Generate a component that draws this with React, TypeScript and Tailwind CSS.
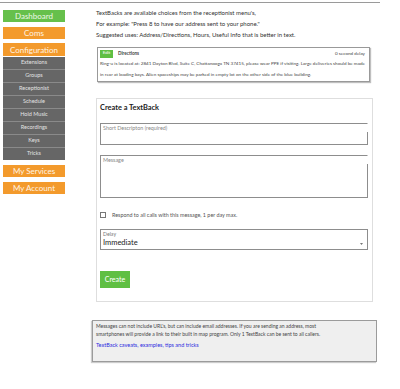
import React from "react";

const subItems = ["Extensions", "Groups", "Receptionist", "Schedule", "Hold Music", "Recordings", "Keys", "Tricks"];

function NavButton({ label, color }: { label: string; color: "green" | "orange" }) {
  return (
    <div
      className={
        color === "green"
          ? "h-[12px] flex items-center justify-center bg-[#66c04b] text-[#eef8e8] text-[8px] leading-none"
          : "h-[12px] flex items-center justify-center bg-[#f39a2c] text-[#fff4e4] text-[8px] leading-none"
      }
    >
      {label}
    </div>
  );
}

function Field({ label, height }: { label: string; height: string }) {
  return (
    <div className={`relative ${height} border border-[#8d8d8d] border-r-transparent`}>
      <div className="absolute right-[-1px] top-[8px] bottom-[-1px] w-px bg-[#8d8d8d]" />
      <div className="pl-[2px] pt-[1px] text-[5.4px] leading-[7px] text-[#888]">{label}</div>
    </div>
  );
}

export default function App() {
  return (
    <div className="w-[400px] h-[389px] bg-white overflow-hidden font-['Lato',sans-serif] pt-[2px]">
      <div className="w-[380px] h-px bg-[#9a9a9a]" />
      <div className="flex">
        {/* sidebar */}
        <div className="ml-[3px] mt-[7px] w-[62px] flex flex-col">
          <NavButton label="Dashboard" color="green" />
          <div className="mt-[5px]">
            <NavButton label="Coms" color="orange" />
          </div>
          <div className="mt-[4px] h-[13px] flex items-center justify-center bg-[#f39a2c] text-[#fff4e4] text-[8px] leading-none">
            Configuration
          </div>
          <div className="mt-px flex flex-col bg-[#8a8a8a] gap-px">
            {subItems.map((s) => (
              <div key={s} className="h-[12px] flex items-center justify-center bg-[#666666] text-[#e2e2e2] text-[5.5px] leading-none">
                {s}
              </div>
            ))}
          </div>
          <div className="mt-[5px]">
            <NavButton label="My Services" color="orange" />
          </div>
          <div className="mt-[5px]">
            <NavButton label="My Account" color="orange" />
          </div>
        </div>

        {/* main */}
        <div className="ml-[31px] pt-[4px] w-[280px] flex flex-col">
          <div className="text-[6px] leading-[11px] text-[#333]">
            <p>TextBacks are available choices from the receptionist menu's,</p>
            <p>For example: "Press 8 to have our address sent to your phone."</p>
            <p>Suggested uses: Address/Directions, Hours, Useful Info that is better in text.</p>
          </div>

          <div className="ml-px mt-[7px] w-[273px] h-[35px] border border-[#999] shadow-[1px_1px_1px_rgba(0,0,0,0.25)] px-[2px] text-[4.6px] text-[#444]">
            <div className="mt-[1px] h-[9px] flex items-center">
              <div className="w-[13px] h-[8px] bg-[#5fbf43] text-white flex items-center justify-center text-[4.5px]">Edit</div>
              <div className="ml-[5px] font-bold">Directions</div>
              <div className="ml-auto mr-[2px]">0 second delay</div>
            </div>
            <p className="leading-[11px] whitespace-nowrap">
              Ring-u is located at: 2841 Dayton Blvd, Suite C, Chattanooga TN 37415, please wear PPE if visiting. Large deliveries should be made
            </p>
            <p className="leading-[11px] whitespace-nowrap">
              in rear at loading bays. Alien spaceships may be parked in empty lot on the other side of the blue building.
            </p>
          </div>

          <div className="mt-[16px] w-[277px] h-[204px] border border-[#dedede] pl-[3px] pr-[4px] pt-[4px]">
            <div className="text-[7.4px] leading-[10px] font-bold text-[#222]">Create a TextBack</div>
            <div className="mt-[10px]">
              <Field label="Short Descripton (required)" height="h-[22px]" />
            </div>
            <div className="mt-[10px]">
              <Field label="Message" height="h-[43px]" />
            </div>
            <div className="mt-[14px] h-[6px] flex items-center">
              <div className="w-[6px] h-[6px] border border-[#777] bg-white" />
              <div className="ml-[6px] text-[5.4px] text-[#555] whitespace-nowrap">Respond to all calls with this message, 1 per day max.</div>
            </div>
            <div className="mt-[11px] h-[21px] border border-[#8d8d8d] flex flex-col pl-[2px] pr-[4px] pt-[1px]">
              <div className="text-[5.2px] leading-[6px] text-[#777]">Delay</div>
              <div className="flex items-center mt-[1px]">
                <span className="text-[7.5px] leading-[9px] text-[#222]">Immediate</span>
                <svg className="ml-auto mt-[2px]" width="3" height="2" viewBox="0 0 3 2">
                  <path d="M0 0 L3 0 L1.5 2 Z" fill="#777" />
                </svg>
              </div>
            </div>
            <div className="mt-[21px] w-[30px] h-[17px] bg-[#5fbf43] text-white text-[7px] flex items-center justify-center">
              Create
            </div>
          </div>

          <div className="-ml-[4px] mt-[18px] w-[285px] h-[42px] border border-[#9b9b9b] bg-[#efefef] shadow-[-1px_1px_1px_rgba(0,0,0,0.2)] pl-[3px] pt-[1px]">
            <p className="text-[5px] leading-[8px] text-[#444] whitespace-nowrap">
              Messages can not include URL's, but can include email addresses. If you are sending an address, most
              <br />
              smartphones will provide a link to their built in map program. Only 1 TextBack can be sent to all callers.
            </p>
            <p className="mt-[3px] text-[5.5px] leading-[8px] text-[#2d2de0]">TextBack caveats, examples, tips and tricks</p>
          </div>
        </div>
      </div>
    </div>
  );
}
